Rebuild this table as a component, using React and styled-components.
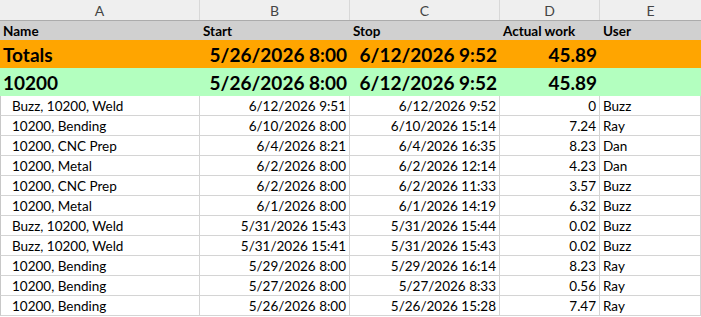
import React from "react";
import styled, { createGlobalStyle } from "styled-components";

const Global = createGlobalStyle`
  html, body { margin: 0; padding: 0; background: #fff; }
  body { font-family: Lato, "Liberation Sans", sans-serif; color: #000; }
`;

const COLS = "200px 150px 150px 100px 101px";

const Sheet = styled.div`
  width: 701px;
  height: 317px;
  overflow: hidden;
  display: flex;
  flex-direction: column;
`;

const LetterBar = styled.div`
  display: grid;
  grid-template-columns: ${COLS};
  height: 20px;
  background: #efefef;
  border-bottom: 1px solid #ababab;
`;

const Letter = styled.div`
  display: flex;
  align-items: center;
  justify-content: center;
  font-size: 14px;
  color: #444;
  border-right: 1px solid #d8d8d8;
  &:last-child { border-right: none; }
`;

const Row = styled.div`
  display: grid;
  grid-template-columns: ${COLS};
  height: ${(p) => p.$h}px;
  background: ${(p) => p.$bg || "#fff"};
  flex: none;
`;

const Cell = styled.div`
  display: flex;
  align-items: center;
  justify-content: ${(p) => (p.$right ? "flex-end" : "flex-start")};
  padding: ${(p) => (p.$right ? "1px 3px 0 0" : `1px 0 0 ${p.$indent || 3}px`)};
  font-size: ${(p) => p.$size || 13.5}px;
  font-weight: ${(p) => (p.$bold ? 700 : 400)};
  white-space: nowrap;
  overflow: hidden;
  box-sizing: border-box;
  ${(p) =>
    p.$grid &&
    `border-right: 1px solid #d4d4d4; border-bottom: 1px solid #d4d4d4;`}
  ${(p) => p.$first && `border-left: 1px solid #c8c8c8;`}
`;

const data = [
  ["Buzz, 10200, Weld", "6/12/2026 9:51", "6/12/2026 9:52", "0", "Buzz"],
  ["10200, Bending", "6/10/2026 8:00", "6/10/2026 15:14", "7.24", "Ray"],
  ["10200, CNC Prep", "6/4/2026 8:21", "6/4/2026 16:35", "8.23", "Dan"],
  ["10200, Metal", "6/2/2026 8:00", "6/2/2026 12:14", "4.23", "Dan"],
  ["10200, CNC Prep", "6/2/2026 8:00", "6/2/2026 11:33", "3.57", "Buzz"],
  ["10200, Metal", "6/1/2026 8:00", "6/1/2026 14:19", "6.32", "Buzz"],
  ["Buzz, 10200, Weld", "5/31/2026 15:43", "5/31/2026 15:44", "0.02", "Buzz"],
  ["Buzz, 10200, Weld", "5/31/2026 15:41", "5/31/2026 15:43", "0.02", "Buzz"],
  ["10200, Bending", "5/29/2026 8:00", "5/29/2026 16:14", "8.23", "Ray"],
  ["10200, Bending", "5/27/2026 8:00", "5/27/2026 8:33", "0.56", "Ray"],
  ["10200, Bending", "5/26/2026 8:00", "5/26/2026 15:28", "7.47", "Ray"],
];

const SummaryRow = ({ label, bg }) => (
  <Row $h={28} $bg={bg}>
    <Cell $bold $size={19}>{label}</Cell>
    <Cell $bold $size={19} $right>5/26/2026 8:00</Cell>
    <Cell $bold $size={19} $right>6/12/2026 9:52</Cell>
    <Cell $bold $size={19} $right>45.89</Cell>
    <Cell />
  </Row>
);

export default function App() {
  return (
    <>
      <Global />
      <Sheet>
        <LetterBar>
          {["A", "B", "C", "D", "E"].map((l) => (
            <Letter key={l}>{l}</Letter>
          ))}
        </LetterBar>
        <Row $h={19} $bg="#d0d0d0">
          <Cell $bold $size={13.5}>Name</Cell>
          <Cell $bold $size={13.5}>Start</Cell>
          <Cell $bold $size={13.5}>Stop</Cell>
          <Cell $bold $size={13.5}>Actual work</Cell>
          <Cell $bold $size={13.5}>User</Cell>
        </Row>
        <SummaryRow label="Totals" bg="#ffa500" />
        <SummaryRow label="10200" bg="#b3ffbf" />
        {data.map((r, i) => (
          <Row key={i} $h={20}>
            <Cell $grid $first $indent={11}>{r[0]}</Cell>
            <Cell $grid $right>{r[1]}</Cell>
            <Cell $grid $right>{r[2]}</Cell>
            <Cell $grid $right>{r[3]}</Cell>
            <Cell $grid>{r[4]}</Cell>
          </Row>
        ))}
      </Sheet>
    </>
  );
}
